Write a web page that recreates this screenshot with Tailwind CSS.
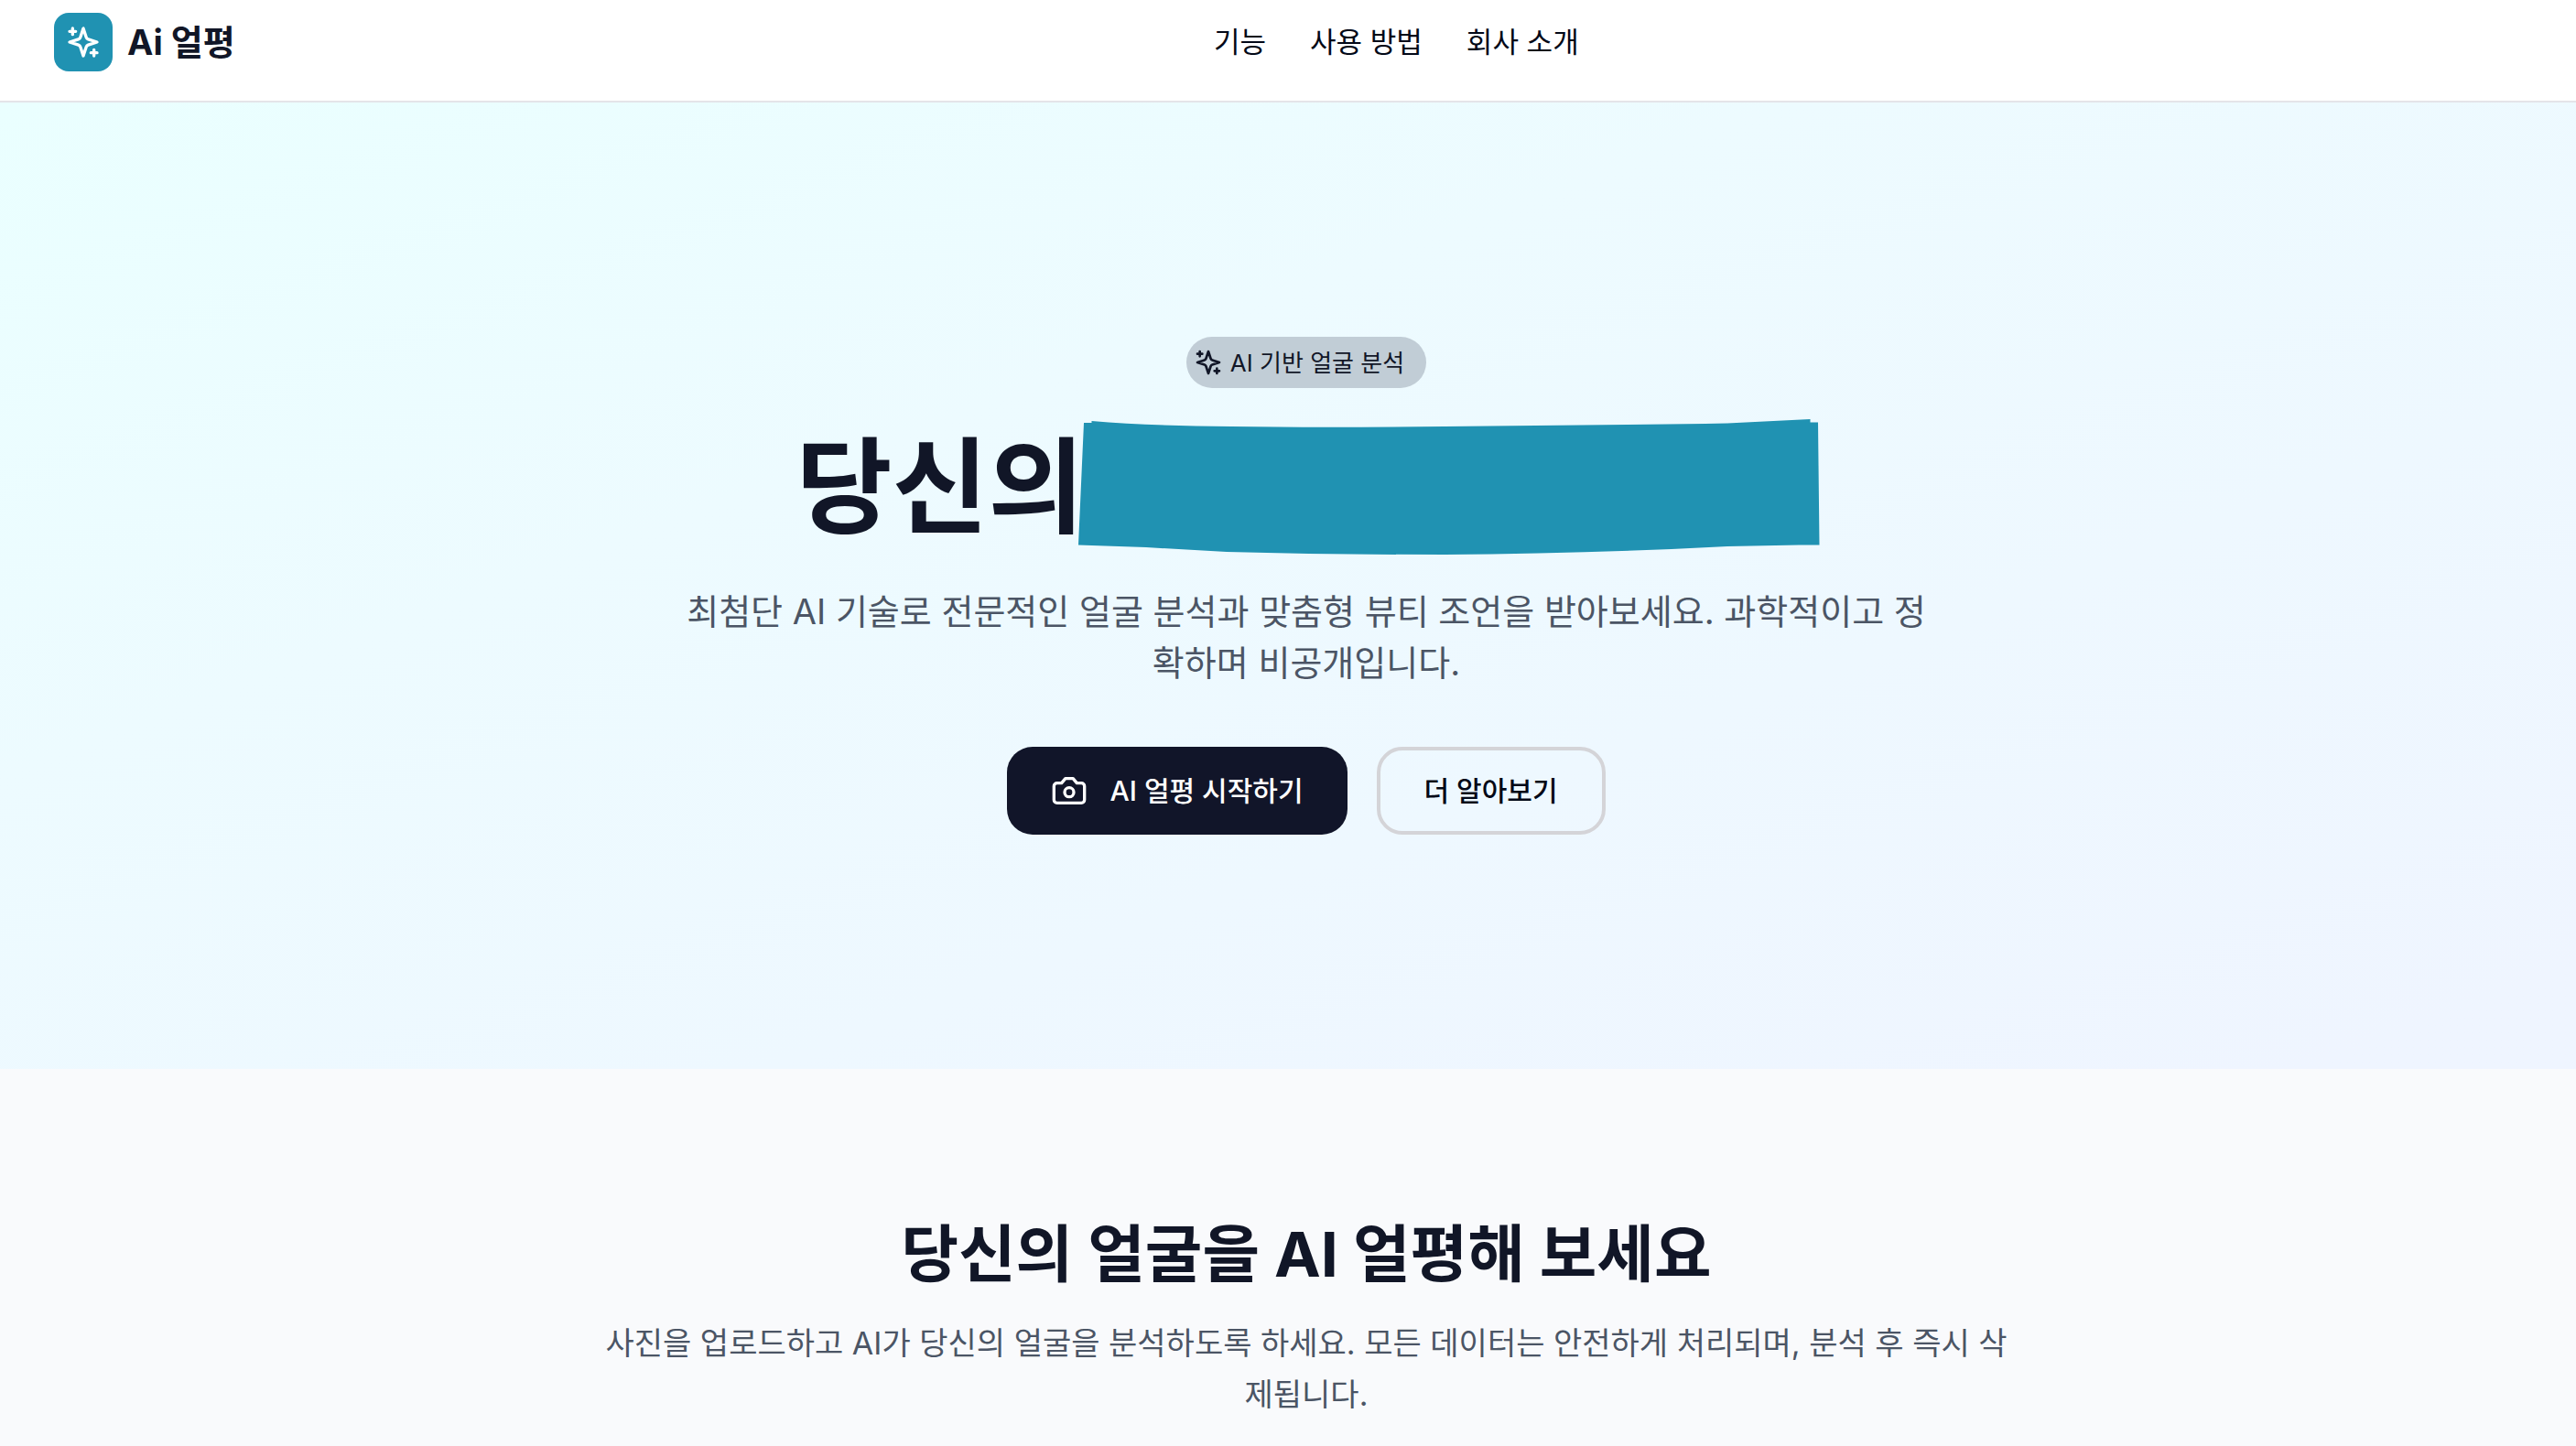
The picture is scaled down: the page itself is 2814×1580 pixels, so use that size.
<!DOCTYPE html>
<html lang="ko">
	<head>
		<meta charset="UTF-8" />
		<meta name="viewport" content="width=device-width, initial-scale=1.0" />
		<script src="https://cdn.jsdelivr.net/npm/@tailwindcss/browser@4"></script>
		<title>Ai 얼평</title>
	</head>
	<body class="min-h-screen bg-[#f9fafc] font-['Inter','Noto_Sans_CJK_KR',sans-serif] text-[#020817]">
		<header class="border-b-2 border-[#e4e4e9] bg-white">
			<div class="flex items-center justify-between pt-3.5 pr-5 pb-8 pl-[59px]">
				<a href="#" class="flex items-center gap-4">
					<span class="flex size-16 items-center justify-center rounded-2xl bg-[#2092b2] text-white">
						<svg class="size-10" viewBox="0 0 24 24" fill="none" stroke="currentColor" stroke-width="2" stroke-linecap="round" stroke-linejoin="round" aria-hidden="true">
							<path d="m12 3-1.912 5.813a2 2 0 0 1-1.275 1.275L3 12l5.813 1.912a2 2 0 0 1 1.275 1.275L12 21l1.912-5.813a2 2 0 0 1 1.275-1.275L21 12l-5.813-1.912a2 2 0 0 1-1.275-1.275L12 3Z" />
							<path d="M5 3v4M19 17v4M3 5h4M17 19h4" />
						</svg>
					</span>
					<span class="text-[38px] leading-14 font-bold text-[#111627]">Ai 얼평</span>
				</a>
				<nav class="flex gap-12 text-[31px] leading-12">
					<a href="#features">기능</a>
					<a href="#how">사용 방법</a>
					<a href="#about">회사 소개</a>
				</nav>
				<div></div>
			</div>
		</header>

		<main>
			<!-- Hero -->
			<section class="bg-linear-to-br from-[#eaffff] via-[#edfbff] via-35% to-[#eff5ff] to-95% pt-64 pb-64 pl-10">
				<div class="flex flex-col items-center text-center">
					<div class="flex h-14 items-center gap-2 rounded-full bg-[#c1cdd6] pr-6 pl-2 text-[26px] text-[#111627]">
						<svg class="size-8" viewBox="0 0 24 24" fill="none" stroke="currentColor" stroke-width="2" stroke-linecap="round" stroke-linejoin="round" aria-hidden="true">
							<path d="m12 3-1.912 5.813a2 2 0 0 1-1.275 1.275L3 12l5.813 1.912a2 2 0 0 1 1.275 1.275L12 21l1.912-5.813a2 2 0 0 1 1.275-1.275L21 12l-5.813-1.912a2 2 0 0 1-1.275-1.275L12 3Z" />
							<path d="M5 3v4M19 17v4M3 5h4M17 19h4" />
						</svg>
						AI 기반 얼굴 분석
					</div>
					<h1 class="mt-8 flex items-center pl-1 text-[114px] leading-[152px] font-bold text-[#111627]">
						당신의
						<svg class="-ml-1.5 h-[148px] w-[810px] text-[#2092b2]" viewBox="0 0 810 148" fill="currentColor" aria-hidden="true">
							<path d="M6 4H14.500V2Q80 7.500 167 8Q262 9.500 400 8L599 6L685 5L709 4.500L799.500 0V3.500H808L809.500 137.500L787 137.500L709 139Q560 147 400 148Q270 148 162 145L74 140L0 137.500Z" />
						</svg>
					</h1>
					<p class="mt-8 max-w-[1360px] text-[38px] leading-14 text-[#4b5565]">최첨단 AI 기술로 전문적인 얼굴 분석과 맞춤형 뷰티 조언을 받아보세요. 과학적이고 정확하며 비공개입니다.</p>
					<div class="mt-16 flex gap-8 text-[30px] font-medium">
						<button type="button" class="flex h-24 items-center gap-6 rounded-[28px] bg-[#111529] px-12 text-white">
							<svg class="size-10" viewBox="0 0 24 24" fill="none" stroke="currentColor" stroke-width="2" stroke-linecap="round" stroke-linejoin="round" aria-hidden="true">
								<path d="M14.500 4h-5L7 7H4a2 2 0 0 0-2 2v9a2 2 0 0 0 2 2h16a2 2 0 0 0 2-2V9a2 2 0 0 0-2-2h-3l-2.500-3z" />
								<circle cx="12" cy="13" r="3" />
							</svg>
							AI 얼평 시작하기
						</button>
						<button type="button" class="h-24 rounded-[28px] border-4 border-[#d4d4d8] px-12">더 알아보기</button>
					</div>
				</div>
			</section>

			<!-- Upload -->
			<section id="features" class="flex flex-col items-center pt-40 pl-10 text-center">
				<h2 class="text-[68px] leading-[84px] font-bold text-[#111627]">당신의 얼굴을 AI 얼평해 보세요</h2>
				<p class="mt-7 max-w-[1536px] text-[34px] leading-14 text-[#4b5565]">사진을 업로드하고 AI가 당신의 얼굴을 분석하도록 하세요. 모든 데이터는 안전하게 처리되며, 분석 후 즉시 삭제됩니다.</p>
			</section>
		</main>
	</body>
</html>
